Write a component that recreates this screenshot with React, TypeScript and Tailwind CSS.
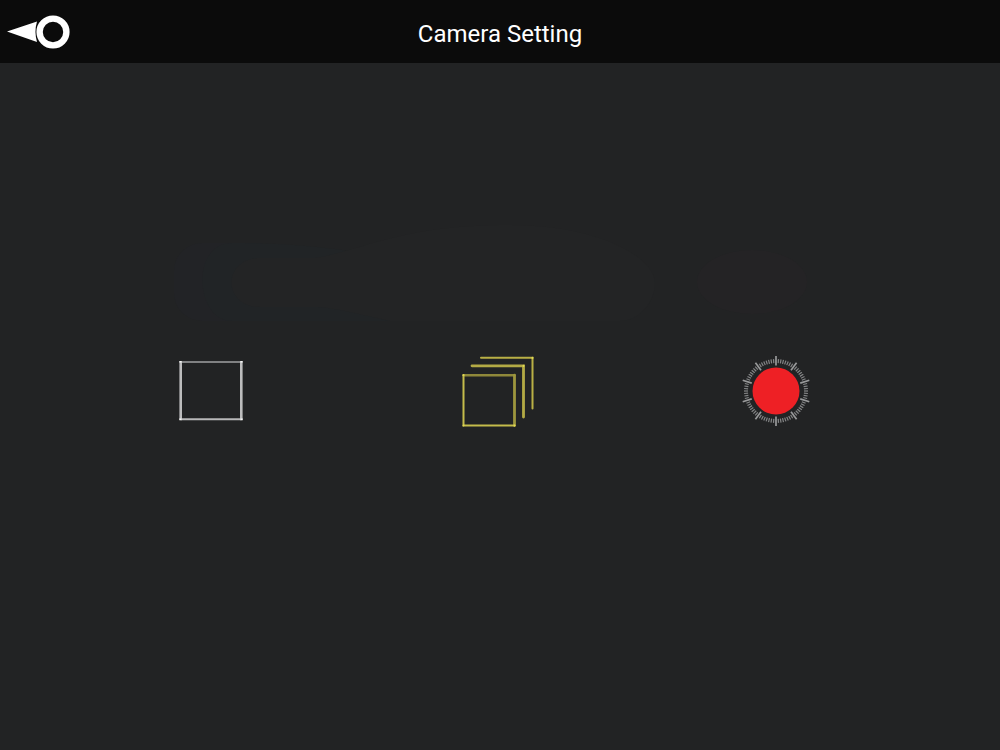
const ticks = Array.from({ length: 80 }, (_, i) => i);

function BackIcon() {
  return (
    <svg viewBox="0 0 64 34" className="w-16 h-[34px]" aria-hidden="true">
      <path d="M0 16.5 L30 6.5 Q27 16.5 30 27 Z" fill="#fff" />
      <circle cx="46" cy="17" r="13.4" fill="none" stroke="#fff" strokeWidth="6.4" />
    </svg>
  );
}

function SingleIcon() {
  return (
    <svg viewBox="0 0 64 72" className="w-16 h-[72px] overflow-visible" fill="none" aria-hidden="true">
      <path d="M-0.5 7 H62.5" stroke="#808182" strokeWidth="2" />
      <path d="M-0.5 64.2 H62.5" stroke="#b8b8b9" strokeWidth="2" />
      <path d="M0.7 6 V65.2 M61.3 6 V65.2" stroke="#bcbcbd" strokeWidth="2.6" />
      <path d="M-0.5 6.8 h2 M60.5 6.8 h2 M-0.5 64.2 h2 M60.5 64.2 h2" stroke="#f5f5f5" strokeWidth="1.6" />
    </svg>
  );
}

function BurstIcon() {
  return (
    <svg viewBox="0 0 72 72" className="size-[72px]" fill="none" strokeLinecap="round" aria-hidden="true">
      <path d="M19 2.8 H70.5 V53.5" stroke="#b9b045" strokeWidth="2" />
      <path d="M10 10.8 H61.5 V62" stroke="#b3aa45" strokeWidth="2.8" />
      <path d="M1.5 20.2 H52.5" stroke="#8f883a" strokeWidth="2.4" />
      <path d="M52.5 20.2 V70.5" stroke="#9d963e" strokeWidth="2.8" />
      <path d="M1.5 20.2 V70.5 H52.5" stroke="#c4bc4b" strokeWidth="2" />
      <path d="M1.5 20 v.1 M1.5 70.5 v.1 M52.5 70.5 v.1 M61.5 10.8 v.1 M70.5 2.8 v.1" stroke="#e0d854" strokeWidth="2" />
    </svg>
  );
}

function RecordIcon() {
  return (
    <svg viewBox="-36 -36 72 72" className="size-[72px]" aria-hidden="true">
      {ticks.map((i) => {
        const major = i % 8 === 0;
        return (
          <line
            key={i}
            y1={major ? -35 : -32}
            y2={major ? -25.5 : -28}
            transform={`rotate(${i * 4.5})`}
            stroke={major ? "#98999a" : "#858687"}
            strokeWidth={major ? 1.7 : 1.2}
          />
        );
      })}
      <circle r="23.5" fill="#ee2025" />
    </svg>
  );
}

// Very faint shapes behind the mode buttons
function Backdrop() {
  return (
    <svg
      viewBox="0 0 1000 687"
      preserveAspectRatio="none"
      className="absolute inset-0 size-full pointer-events-none"
      aria-hidden="true"
    >
      <rect x="174" y="180" width="110" height="78" rx="28" fill="#222326" />
      <path d="M232 180 C290 180 320 184 350 188 L390 258 H232 C195 258 190 180 232 180 Z" fill="#212426" />
      <path
        d="M260 195 H315 C365 187 400 162 510 162 C600 162 655 195 655 220 C655 238 640 258 620 258 H390 C355 250 330 244 315 244 H260 C222 244 222 195 260 195 Z"
        fill="#232425"
      />
      <ellipse cx="752" cy="219" rx="55" ry="32" fill="#242325" />
    </svg>
  );
}

export default function App() {
  return (
    <div className="min-h-screen flex flex-col bg-[#222324] font-['Roboto','Liberation_Sans',sans-serif] text-white">
      <header className="grid grid-cols-[1fr_auto_1fr] items-center h-[63px] px-[7px] bg-[#0b0b0b]">
        <button type="button" aria-label="Back" className="justify-self-start cursor-pointer">
          <BackIcon />
        </button>
        <h1 className="pt-1 text-2xl leading-7 font-normal">Camera Setting</h1>
      </header>

      <main className="relative flex-1 flex items-center pl-[18%] pb-8">
        <Backdrop />
        <button type="button" aria-label="Single shot" className="relative mr-[26.6%] cursor-pointer">
          <SingleIcon />
        </button>
        <button type="button" aria-label="Burst" className="relative mr-[25.1%] cursor-pointer">
          <BurstIcon />
        </button>
        <button type="button" aria-label="Record" className="relative cursor-pointer">
          <RecordIcon />
        </button>
      </main>
    </div>
  );
}
